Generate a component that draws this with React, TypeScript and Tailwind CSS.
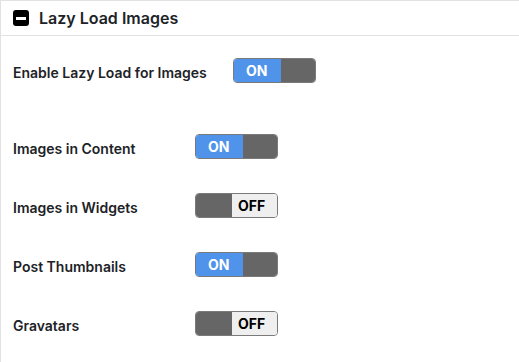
import React from 'react';

const ROWS = [
  { label: 'Images in Content', on: true },
  { label: 'Images in Widgets', on: false },
  { label: 'Post Thumbnails', on: true },
  { label: 'Gravatars', on: false },
];

function Toggle({ on }: { on: boolean }) {
  return (
    <div className="flex h-[25px] w-[83px] overflow-hidden rounded-[4px] border border-[#7a7a7a] text-[14px] font-bold">
      {on ? (
        <>
          <div className="flex w-[47px] items-center pl-[12px] bg-[#4f94ea] text-white">ON</div>
          <div className="flex-1 bg-[#666666]" />
        </>
      ) : (
        <>
          <div className="w-[36px] bg-[#666666]" />
          <div className="flex flex-1 items-center pl-[6px] bg-[#efefef] text-black">OFF</div>
        </>
      )}
    </div>
  );
}

export default function App() {
  return (
    <div
      className="h-[362px] w-[519px] border-l border-t border-[#e2e2e2] bg-white text-[#1d2327]"
      style={{ fontFamily: 'Inter, "Noto Sans", sans-serif' }}
    >
      <div className="flex h-[35px] items-center gap-[10px] border-b border-[#e2e2e2] pl-[12px]">
        <div className="flex h-[16px] w-[16px] items-center justify-center rounded-[3px] bg-black">
          <div className="h-[3px] w-[10px] bg-white" />
        </div>
        <h2 className="text-[16px] font-semibold leading-none">Lazy Load Images</h2>
      </div>

      <div className="flex items-center pl-[12px] pt-[22px]">
        <span className="w-[220px] pt-[3px] text-[14px] font-semibold">Enable Lazy Load for Images</span>
        <Toggle on />
      </div>

      <div className="flex flex-col gap-[34px] pl-[12px] pt-[51px]">
        {ROWS.map((r) => (
          <div key={r.label} className="flex items-center">
            <span className="w-[182px] pt-[4px] text-[14px] font-semibold">{r.label}</span>
            <Toggle on={r.on} />
          </div>
        ))}
      </div>
    </div>
  );
}
